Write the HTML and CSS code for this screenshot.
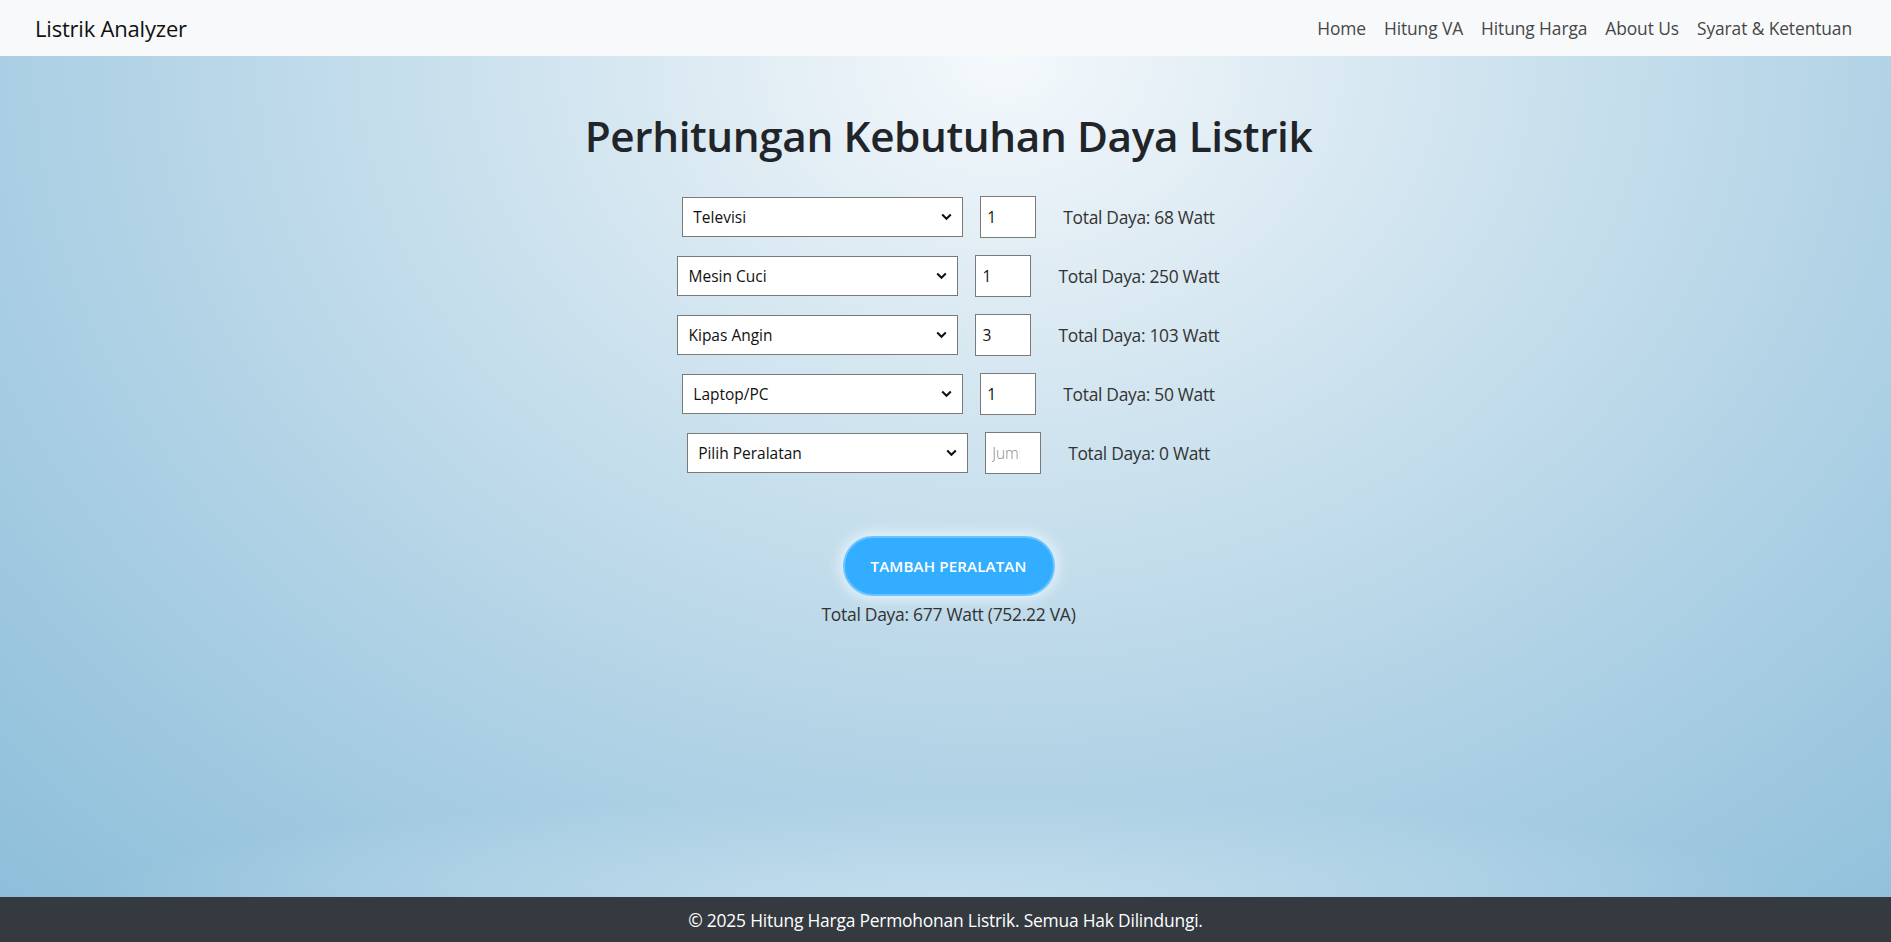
FILE: index.html
```html
<!DOCTYPE html>
<html lang="id">
<head>
<meta charset="utf-8">
<title>Listrik Analyzer</title>
<link rel="stylesheet" href="styles.css">
</head>
<body>
<div class="page">
  <nav class="navbar">
    <a class="brand" href="#">Listrik Analyzer</a>
    <ul class="nav-links">
      <li><a href="#">Home</a></li>
      <li><a href="#">Hitung VA</a></li>
      <li><a href="#">Hitung Harga</a></li>
      <li><a href="#">About Us</a></li>
      <li><a href="#">Syarat &amp; Ketentuan</a></li>
    </ul>
  </nav>

  <main class="main">
    <h1 class="title">Perhitungan Kebutuhan Daya Listrik</h1>

    <div class="rows">
      <div class="row">
        <select class="sel"><option>Televisi</option></select>
        <input class="qty" type="number" value="1" placeholder="Jumlah">
        <span class="row-total">Total Daya: 68 Watt</span>
      </div>
      <div class="row">
        <select class="sel"><option>Mesin Cuci</option></select>
        <input class="qty" type="number" value="1" placeholder="Jumlah">
        <span class="row-total">Total Daya: 250 Watt</span>
      </div>
      <div class="row">
        <select class="sel"><option>Kipas Angin</option></select>
        <input class="qty" type="number" value="3" placeholder="Jumlah">
        <span class="row-total">Total Daya: 103 Watt</span>
      </div>
      <div class="row">
        <select class="sel"><option>Laptop/PC</option></select>
        <input class="qty" type="number" value="1" placeholder="Jumlah">
        <span class="row-total">Total Daya: 50 Watt</span>
      </div>
      <div class="row">
        <select class="sel"><option>Pilih Peralatan</option></select>
        <input class="qty" type="number" placeholder="Jumlah">
        <span class="row-total">Total Daya: 0 Watt</span>
      </div>
    </div>

    <button class="add-btn" type="button">TAMBAH PERALATAN</button>
    <p class="grand-total">Total Daya: 677 Watt (752.22 VA)</p>
  </main>

  <footer class="footer">
    <p>© 2025 Hitung Harga Permohonan Listrik. Semua Hak Dilindungi.</p>
  </footer>
</div>
</body>
</html>
```

FILE: styles.css
```css
* { box-sizing: border-box; }

html, body {
  margin: 0;
  padding: 0;
  height: 100%;
}

body {
  font-family: "Open Sans", "Noto Sans", "Liberation Sans", sans-serif;
  font-size: 16px;
  color: #212529;
}

.page {
  min-height: 100vh;
  display: flex;
  flex-direction: column;
}

.navbar {
  height: 56px;
  background: #f8f9fa;
  display: flex;
  align-items: center;
  justify-content: space-between;
  padding: 0 30px 0 35px;
}

.brand {
  font-size: 22px;
  color: #111;
  text-decoration: none;
  letter-spacing: -0.2px;
}

.nav-links {
  list-style: none;
  display: flex;
  margin: 0;
  padding: 0;
}

.nav-links a {
  display: block;
  padding: 8px 9px;
  font-size: 17.4px;
  color: #474747;
  text-decoration: none;
  letter-spacing: -0.1px;
  font-weight: 400;
}

.main {
  flex: 1;
  display: flex;
  flex-direction: column;
  align-items: center;
  padding-top: 55px;
  background:
    radial-gradient(ellipse 45% 12% at 50% 100%, rgba(205, 228, 241, 0.7), rgba(205, 228, 241, 0) 100%),
    radial-gradient(ellipse 85% 155% at 53% 0%, #f4f9fc 0%, #e3eef5 14%, #cce2ee 32%, #b2d3e6 55%, #99c5de 78%, #89bbd8 95%, #86b9d7 100%);
}

.title {
  margin: 0 0 34px;
  font-size: 42.3px;
  font-weight: 600;
  letter-spacing: -0.4px;
  line-height: 1.2;
  color: #212529;
  padding-left: 6px;
}

.rows {
  display: flex;
  flex-direction: column;
  align-items: center;
  gap: 17px;
  padding-left: 6px;
}

.row {
  display: flex;
  align-items: center;
  height: 42px;
}

.sel {
  appearance: none;
  -webkit-appearance: none;
  width: 281px;
  height: 40px;
  border: 1px solid #7a7a7a;
  border-radius: 0;
  background-color: #fff;
  background-image: url("data:image/svg+xml,%3Csvg xmlns='http://www.w3.org/2000/svg' width='11' height='8' viewBox='0 0 11 8'%3E%3Cpath d='M1.2 1.5 L5.5 5.8 L9.8 1.5' fill='none' stroke='%23111' stroke-width='2'/%3E%3C/svg%3E");
  background-repeat: no-repeat;
  background-position: right 10px center;
  padding: 0 28px 0 10px;
  font-family: inherit;
  font-size: 15.5px;
  color: #111;
}

.qty {
  width: 56px;
  height: 42px;
  margin-left: 17px;
  border: 1px solid #7a7a7a;
  border-radius: 0;
  background: #fff;
  padding: 0 20px 0 6px;
  font-family: inherit;
  font-size: 15.5px;
  color: #111;
  -moz-appearance: textfield;
}

.qty::-webkit-outer-spin-button,
.qty::-webkit-inner-spin-button {
  -webkit-appearance: none;
  margin: 0;
}

.qty::placeholder {
  color: #8a8a8a;
  font-weight: 300;
}

.row-total {
  margin-left: 27px;
  font-size: 17.4px;
  color: #333;
  font-weight: 400;
  letter-spacing: -0.3px;
}

.add-btn {
  margin-top: 62px;
  width: 212px;
  height: 60px;
  border: 2px solid #6cc4ff;
  border-radius: 30px;
  background: #33adff;
  color: #fff;
  font-family: inherit;
  font-size: 15.2px;
  font-weight: 600;
  letter-spacing: 0.1px;
  box-shadow: 0 0 14px 3px rgba(235, 247, 255, 0.9);
  margin-left: 6px;
  cursor: pointer;
}

.grand-total {
  margin: 6px 0 0 6px;
  font-size: 17.5px;
  color: #333;
  letter-spacing: -0.3px;
}

.footer {
  height: 45px;
  background: #343a40;
  display: flex;
  align-items: center;
  justify-content: center;
  color: #fff;
}

.footer p {
  margin: 0;
  font-size: 17.4px;
  letter-spacing: -0.2px;
  font-weight: 400;
}
```
